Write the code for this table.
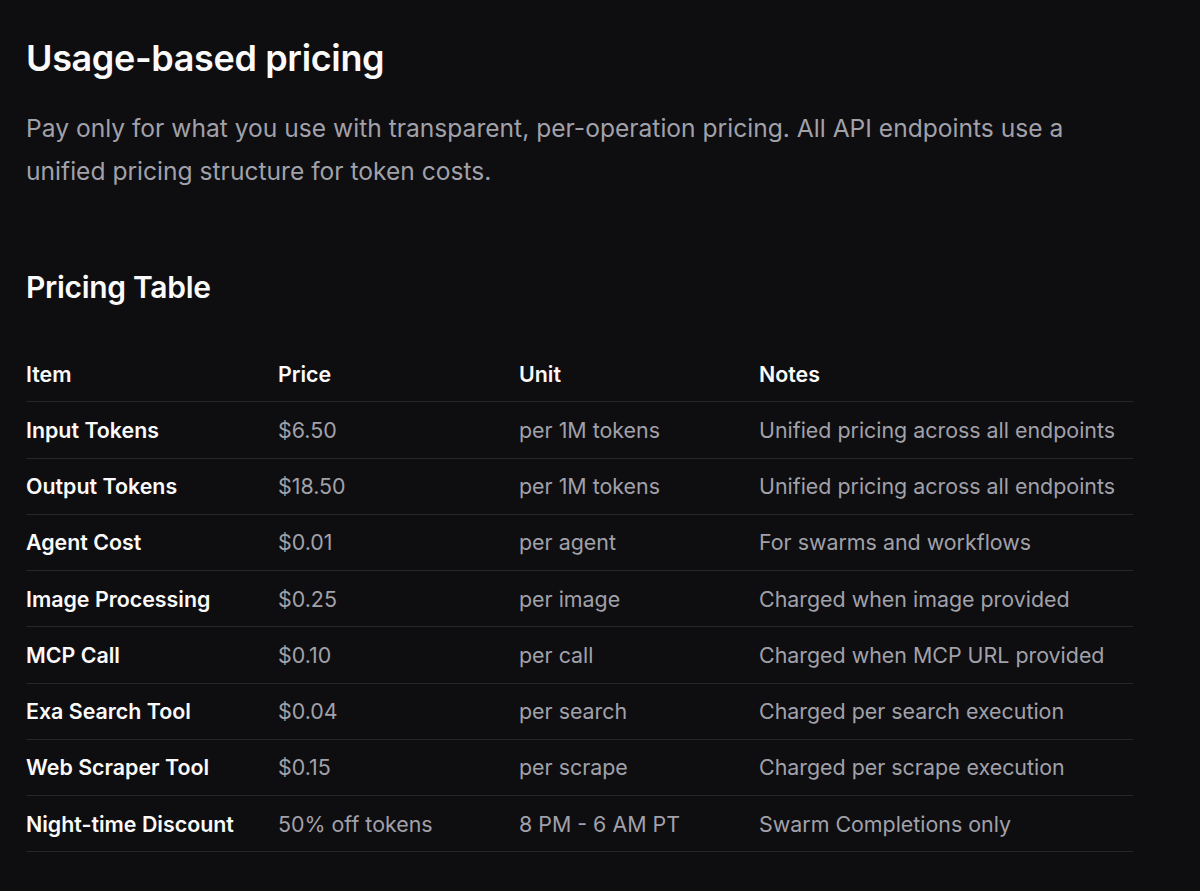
const rows = [
  { item: "Input Tokens", price: "$6.50", unit: "per 1M tokens", notes: "Unified pricing across all endpoints" },
  { item: "Output Tokens", price: "$18.50", unit: "per 1M tokens", notes: "Unified pricing across all endpoints" },
  { item: "Agent Cost", price: "$0.01", unit: "per agent", notes: "For swarms and workflows" },
  { item: "Image Processing", price: "$0.25", unit: "per image", notes: "Charged when image provided" },
  { item: "MCP Call", price: "$0.10", unit: "per call", notes: "Charged when MCP URL provided" },
  { item: "Exa Search Tool", price: "$0.04", unit: "per search", notes: "Charged per search execution" },
  { item: "Web Scraper Tool", price: "$0.15", unit: "per scrape", notes: "Charged per scrape execution" },
  { item: "Night-time Discount", price: "50% off tokens", unit: "8 PM - 6 AM PT", notes: "Swarm Completions only" },
];

const cols = "grid grid-cols-[252px_241px_240px_1fr] items-center h-[56.25px] border-b border-[#27272a]";

export default function App() {
  return (
    <div className="min-h-[891px] bg-[#0e0d10] pl-[26px] pt-[38px] font-['Inter','Liberation_Sans',sans-serif] text-[#fafafa] antialiased">
      <div className="w-[1107px]">
        <h1 className="text-[36px] font-semibold leading-[40px] tracking-[-0.01em]">
          Usage-based pricing
        </h1>
        <p className="mt-[29px] text-[24.6px] leading-[43px] text-[#a1a1aa]">
          Pay only for what you use with transparent, per-operation pricing. All API endpoints use a unified pricing
          structure for token costs.
        </p>

        <h2 className="mt-[76px] text-[30px] font-semibold leading-[36px] tracking-[-0.01em]">Pricing Table</h2>

        <div className="mt-[41px] text-[21.4px] leading-[28px]">
          <div className={cols + " font-semibold text-[#fafafa]"}>
            <span>Item</span>
            <span>Price</span>
            <span>Unit</span>
            <span>Notes</span>
          </div>
          {rows.map((row) => (
            <div key={row.item} className={cols}>
              <span className="font-semibold text-[#fafafa]">{row.item}</span>
              <span className="text-[#a1a1aa]">{row.price}</span>
              <span className="text-[#a1a1aa]">{row.unit}</span>
              <span className="text-[#a1a1aa]">{row.notes}</span>
            </div>
          ))}
        </div>
      </div>
    </div>
  );
}
